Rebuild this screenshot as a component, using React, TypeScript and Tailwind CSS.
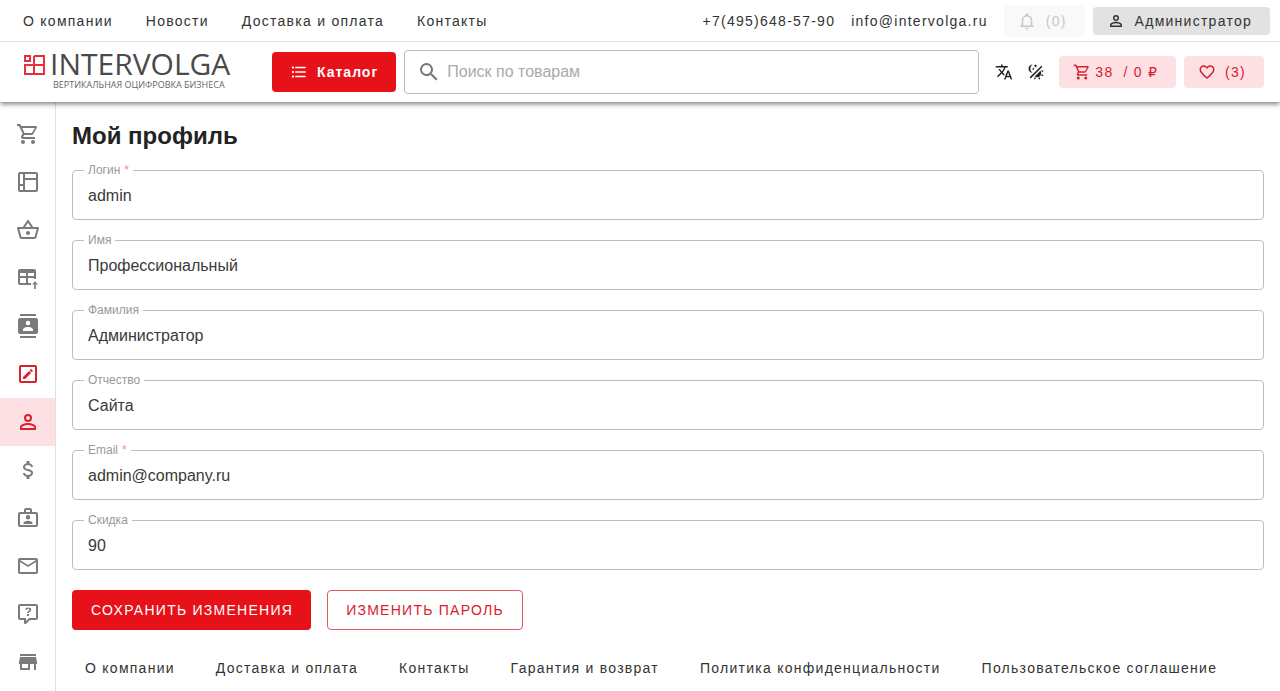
import { useState, type ReactNode } from "react";
import {
  MdFormatListBulleted,
  MdOutlineShoppingBasket,
} from "react-icons/md";

const paths = {
  cart: "M17,18A2,2 0 0,1 19,20A2,2 0 0,1 17,22C15.89,22 15,21.1 15,20C15,18.89 15.89,18 17,18M1,2H4.27L5.21,4H20A1,1 0 0,1 21,5C21,5.17 20.95,5.34 20.88,5.5L17.3,11.97C16.96,12.58 16.3,13 15.55,13H8.1L7.2,14.63L7.17,14.75A0.25,0.25 0 0,0 7.42,15H19V17H7C5.89,17 5,16.1 5,15C5,14.65 5.09,14.32 5.24,14.04L6.6,11.59L3,4H1V2M7,18A2,2 0 0,1 9,20A2,2 0 0,1 7,22C5.89,22 5,21.1 5,20C5,18.89 5.89,18 7,18M16,11L18.78,6H6.14L8.5,11H16Z",
  layout:
    "M4,2H20A2,2 0 0,1 22,4V20A2,2 0 0,1 20,22H4A2,2 0 0,1 2,20V4A2,2 0 0,1 4,2M4,4V14H7V4H4M9,4V8H20V4H9M9,10V20H20V10H9M4,16V20H7V16H4Z",
  tableUp:
    "M4,3H18A2,2 0 0,1 20,5V13H18V12H12V17H15V19H4A2,2 0 0,1 2,17V5A2,2 0 0,1 4,3M4,7V10H10V7H4M12,7V10H18V7H12M4,12V17H10V12H4M18.2,23V18.5H16.2L19,15.2L21.8,18.5H19.8V23Z",
  contacts:
    "M20,0H4V2H20V0M4,24H20V22H4V24M20,4H4A2,2 0 0,0 2,6V18A2,2 0 0,0 4,20H20A2,2 0 0,0 22,18V6A2,2 0 0,0 20,4M12,6.75A2.25,2.25 0 0,1 14.25,9A2.25,2.25 0 0,1 12,11.25A2.25,2.25 0 0,1 9.75,9A2.25,2.25 0 0,1 12,6.75M17,17H7V15.5C7,13.83 10.33,13 12,13C13.67,13 17,13.83 17,15.5V17Z",
  pencil:
    "M19,19V5H5V19H19M19,3A2,2 0 0,1 21,5V19C21,20.11 20.1,21 19,21H5A2,2 0 0,1 3,19V5A2,2 0 0,1 5,3H19M16.7,9.35L15.7,10.35L13.65,8.3L14.65,7.3C14.86,7.08 15.21,7.08 15.42,7.3L16.7,8.58C16.92,8.79 16.92,9.14 16.7,9.35M7,14.94L13.06,8.88L15.12,10.94L9.06,17H7V14.94Z",
  account:
    "M12,4A4,4 0 0,1 16,8A4,4 0 0,1 12,12A4,4 0 0,1 8,8A4,4 0 0,1 12,4M12,6A2,2 0 0,0 10,8A2,2 0 0,0 12,10A2,2 0 0,0 14,8A2,2 0 0,0 12,6M12,13C14.67,13 20,14.33 20,17V20H4V17C4,14.33 9.33,13 12,13M12,14.9C9.03,14.9 5.9,16.36 5.9,17V18.1H18.1V17C18.1,16.36 14.97,14.9 12,14.9Z",
  dollar:
    "M7,15H9C9,16.08 10.37,17 12,17C13.63,17 15,16.08 15,15C15,13.9 13.96,13.5 11.76,12.97C9.64,12.44 7,11.78 7,9C7,7.21 8.47,5.69 10.5,5.18V3H13.5V5.18C15.53,5.69 17,7.21 17,9H15C15,7.92 13.63,7 12,7C10.37,7 9,7.92 9,9C9,10.1 10.04,10.5 12.24,11.03C14.36,11.56 17,12.22 17,15C17,16.79 15.53,18.31 13.5,18.82V21H10.5V18.82C8.47,18.31 7,16.79 7,15Z",
  briefcase:
    "M10,2H14A2,2 0 0,1 16,4V6H20A2,2 0 0,1 22,8V19A2,2 0 0,1 20,21H4A2,2 0 0,1 2,19V8A2,2 0 0,1 4,6H8V4A2,2 0 0,1 10,2M14,6V4H10V6H14M4,8V19H20V8H4M12,9A2.25,2.25 0 0,1 14.25,11.25A2.25,2.25 0 0,1 12,13.5A2.25,2.25 0 0,1 9.75,11.25A2.25,2.25 0 0,1 12,9M16.5,18H7.5V16.88C7.5,15.63 9.5,14.63 12,14.63C14.5,14.63 16.5,15.63 16.5,16.88V18Z",
  mail: "M22 6C22 4.9 21.1 4 20 4H4C2.9 4 2 4.9 2 6V18C2 19.1 2.9 20 4 20H20C21.1 20 22 19.1 22 18V6M20 6L12 11L4 6H20M20 18H4V8L12 13L20 8V18Z",
  question:
    "M4,2H20A2,2 0 0,1 22,4V16A2,2 0 0,1 20,18H13.9L10.2,21.71C10,21.9 9.75,22 9.5,22H9A1,1 0 0,1 8,21V18H4A2,2 0 0,1 2,16V4C2,2.89 2.9,2 4,2M4,4V16H10V19.08L13.08,16H20V4H4M12.19,5.5C11.3,5.5 10.59,5.68 10.05,6.04C9.5,6.4 9.22,7 9.27,7.69H11.24C11.24,7.41 11.34,7.2 11.5,7.06C11.7,6.92 11.92,6.85 12.19,6.85C12.5,6.85 12.77,6.93 12.95,7.11C13.13,7.28 13.22,7.5 13.22,7.8C13.22,8.08 13.14,8.33 13,8.54C12.83,8.76 12.62,8.94 12.36,9.08C11.84,9.4 11.5,9.68 11.29,9.92C11.1,10.16 11,10.5 11,11H13C13,10.72 13.05,10.5 13.14,10.32C13.23,10.15 13.4,10 13.66,9.85C14.12,9.64 14.5,9.36 14.79,9C15.08,8.63 15.23,8.24 15.23,7.8C15.23,7.1 14.96,6.54 14.42,6.12C13.88,5.71 13.13,5.5 12.19,5.5M11,12V14H13V12H11Z",
  store:
    "M12,18H6V14H12M21,14V12L20,7H4L3,12V14H4V20H14V14H18V20H20V14M20,4H4V6H20V4Z",
  translate:
    "M12.87,15.07L10.33,12.56L10.36,12.53C12.1,10.59 13.34,8.36 14.07,6H17V4H10V2H8V4H1V6H12.17C11.5,7.92 10.44,9.75 9,11.35C8.07,10.32 7.3,9.19 6.69,8H4.69C5.42,9.63 6.42,11.17 7.67,12.56L2.58,17.58L4,19L9,14L12.11,17.11L12.87,15.07M18.5,10H16.5L12,22H14L15.12,19H19.87L21,22H23L18.5,10M15.88,17L17.5,12.67L19.12,17H15.88Z",
  theme:
    "M7.5,2C5.71,3.15 4.5,5.18 4.5,7.5C4.5,9.82 5.71,11.85 7.53,13C4.46,13 2,10.54 2,7.5A5.5,5.5 0 0,1 7.5,2M19.07,3.5L20.5,4.93L4.93,20.5L3.5,19.07L19.07,3.5M12.89,5.93L11.41,5L9.97,6L10.39,4.3L9,3.24L10.75,3.12L11.33,1.47L12,3.1L13.73,3.13L12.38,4.26L12.89,5.93M9.59,9.54L8.43,8.81L7.31,9.59L7.65,8.27L6.56,7.44L7.92,7.35L8.37,6.06L8.88,7.33L10.24,7.36L9.19,8.23L9.59,9.54M19,13.5A5.5,5.5 0 0,1 13.5,19C12.28,19 11.15,18.6 10.24,17.93L17.93,10.24C18.6,11.15 19,12.28 19,13.5M14.6,20.08L17.37,18.93L17.13,22.28L14.6,20.08M18.93,17.38L20.08,14.61L22.28,17.15L18.93,17.38M20.08,12.42L18.94,9.64L22.28,9.88L20.08,12.42M9.63,18.93L12.4,20.08L9.87,22.27L9.63,18.93Z",
  bell: "M10 21H14C14 22.1 13.1 23 12 23S10 22.1 10 21M21 19V20H3V19L5 17V11C5 7.9 7.03 5.17 10 4.29C10 4.19 10 4.1 10 4C10 2.9 10.9 2 12 2S14 2.9 14 4C14 4.1 14 4.19 14 4.29C16.97 5.17 19 7.9 19 11V17L21 19M17 11C17 8.24 14.76 6 12 6S7 8.24 7 11V18H17V11Z",
  heart:
    "M12.1,18.55L12,18.65L11.89,18.55C7.14,14.24 4,11.39 4,8.5C4,6.5 5.5,5 7.5,5C9.04,5 10.54,6 11.07,7.36H12.93C13.46,6 14.96,5 16.5,5C18.5,5 20,6.5 20,8.5C20,11.39 16.86,14.24 12.1,18.55M16.5,3C14.76,3 13.09,3.81 12,5.08C10.91,3.81 9.24,3 7.5,3C4.42,3 2,5.41 2,8.5C2,12.27 5.4,15.36 10.55,20.03L12,21.35L13.45,20.03C18.6,15.36 22,12.27 22,8.5C22,5.41 19.58,3 16.5,3Z",
  search:
    "M9.5,3A6.5,6.5 0 0,1 16,9.5C16,11.11 15.41,12.59 14.44,13.73L14.71,14H15.5L20.5,19L19,20.5L14,15.5V14.71L13.73,14.44C12.59,15.41 11.11,16 9.5,16A6.5,6.5 0 0,1 3,9.5A6.5,6.5 0 0,1 9.5,3M9.5,5C7,5 5,7 5,9.5C5,12 7,14 9.5,14C12,14 14,12 14,9.5C14,7 12,5 9.5,5Z",
};

function Icon({ name, className = "size-6" }: { name: keyof typeof paths; className?: string }) {
  return (
    <svg viewBox="0 0 24 24" fill="currentColor" aria-hidden="true" className={`shrink-0 ${className}`}>
      <path d={paths[name]} />
    </svg>
  );
}

function Logo() {
  return (
    <a href="#" aria-label="Intervolga" className="shrink-0">
      <svg viewBox="0 0 208 40" className="h-10 w-52 overflow-visible" aria-hidden="true">
        <g fill="none" stroke="#e8303c" strokeWidth="2">
          <rect x="1" y="4" width="5" height="5" />
          <path d="M10 4H20V22H1V13H20M10 4V22" />
        </g>
        <text x="26" y="23" fontFamily="Open Sans" fontSize="30" fill="#4a4a4a">INTERVOLGA</text>
        <text x="29" y="36" fontFamily="Open Sans" fontSize="9" fill="#666">ВЕРТИКАЛЬНАЯ ОЦИФРОВКА БИЗНЕСА</text>
      </svg>
    </a>
  );
}

const topLinks = ["О компании", "Новости", "Доставка и оплата", "Контакты"];

const footerLinks = [
  "О компании",
  "Доставка и оплата",
  "Контакты",
  "Гарантия и возврат",
  "Политика конфиденциальности",
  "Пользовательское соглашение",
];

const sideItems: { label: string; icon: ReactNode; tone?: string }[] = [
  { label: "Корзина", icon: <Icon name="cart" /> },
  { label: "Рабочий стол", icon: <Icon name="layout" /> },
  { label: "Заказы", icon: <MdOutlineShoppingBasket className="size-6" /> },
  { label: "Импорт", icon: <Icon name="tableUp" /> },
  { label: "Контакты", icon: <Icon name="contacts" /> },
  { label: "Редактирование", icon: <Icon name="pencil" />, tone: "text-[#d9202c]" },
  { label: "Профиль", icon: <Icon name="account" />, tone: "bg-[#fde0e3] text-[#d9202c]" },
  { label: "Оплата", icon: <Icon name="dollar" /> },
  { label: "Компания", icon: <Icon name="briefcase" /> },
  { label: "Сообщения", icon: <Icon name="mail" /> },
  { label: "Поддержка", icon: <Icon name="question" /> },
  { label: "Магазин", icon: <Icon name="store" /> },
];

const fields = [
  { id: "login", label: "Логин", value: "admin", required: true },
  { id: "name", label: "Имя", value: "Профессиональный" },
  { id: "surname", label: "Фамилия", value: "Администратор" },
  { id: "patronymic", label: "Отчество", value: "Сайта" },
  { id: "email", label: "Email", value: "admin@company.ru", required: true },
  { id: "discount", label: "Скидка", value: "90" },
];

function Field({ id, label, value, required }: { id: string; label: string; value: string; required?: boolean }) {
  const [text, setText] = useState(value);
  return (
    <div className="relative">
      <label htmlFor={id} className="absolute -top-2 left-3 bg-white px-1 text-xs leading-4 text-[#999]">
        {label}
        {required && <span className="ml-1 text-[#f08a96]">*</span>}
      </label>
      <input
        id={id}
        value={text}
        required={required}
        onChange={(e) => setText(e.target.value)}
        className="block h-[50px] w-full rounded border border-[#bdbdbd] bg-white px-[15px] pt-0.5 text-base text-[#3a3a3a]"
      />
    </div>
  );
}

export default function App() {
  return (
    <div className="flex h-screen flex-col overflow-hidden bg-white font-['Liberation_Sans',Arial,sans-serif] text-[#333]">
      <header className="relative z-10 shrink-0 bg-white shadow-[0_2px_5px_rgba(0,0,0,0.5)]">
        <div className="flex h-[42px] items-center justify-between border-b border-[#e0e0e0] pr-2.5 pl-[23px] text-sm tracking-[0.09em]">
          <nav className="flex gap-[33px]">
            {topLinks.map((t) => (
              <a key={t} href="#">{t}</a>
            ))}
          </nav>
          <div className="flex items-center">
            <a href="tel:+74956485790">+7(495)648-57-90</a>
            <a href="mailto:info@intervolga.ru" className="ml-4">info@intervolga.ru</a>
            <button disabled className="ml-4 flex h-8 items-center gap-2.5 rounded bg-[#f9f9f9] pr-[18px] pl-3.5 tracking-[0.09em] text-[#c8c8c8]">
              <Icon name="bell" className="size-[18px]" />
              (0)
            </button>
            <button className="ml-2 flex h-7 items-center gap-2.5 rounded bg-[#e2e2e2] pr-[18px] pl-3.5 tracking-[0.09em] text-[#333]">
              <Icon name="account" className="size-[18px]" />
              Администратор
            </button>
          </div>
        </div>
        <div className="flex h-[60px] items-center pr-4 pl-6">
          <Logo />
          <button className="ml-10 flex h-10 shrink-0 items-center gap-[9px] rounded bg-[#e71119] px-[18px] text-sm font-bold tracking-[1px] text-white">
            <MdFormatListBulleted className="size-[18px]" />
            Каталог
          </button>
          <label className="ml-2 flex h-11 flex-1 items-center gap-1.5 rounded border border-[#bdbdbd] px-3 text-[#757575]">
            <Icon name="search" />
            <input
              type="search"
              aria-label="Поиск по товарам"
              placeholder="Поиск по товарам"
              className="min-w-0 flex-1 text-base text-[#333] placeholder:text-[#aaa]"
            />
          </label>
          <button aria-label="Язык" className="ml-4 text-[#222]">
            <Icon name="translate" className="size-[18px]" />
          </button>
          <button aria-label="Тема" className="ml-3.5 text-[#222]">
            <Icon name="theme" className="size-[18px]" />
          </button>
          <button className="ml-3.5 flex h-8 items-center rounded bg-[#fde0e3] pr-[18px] pl-3.5 text-sm tracking-[0.09em] text-[#d9202c]">
            <Icon name="cart" className="size-[18px]" />
            <span className="ml-1">38</span>
            <span className="ml-2.5">
              / 0 <span className="font-['DejaVu_Sans',sans-serif]">₽</span>
            </span>
          </button>
          <button className="ml-2 flex h-8 items-center gap-[9px] rounded bg-[#fde0e3] pr-[18px] pl-3.5 text-sm tracking-[0.09em] text-[#d9202c]">
            <Icon name="heart" className="size-[18px]" />
            (3)
          </button>
        </div>
      </header>

      <div className="flex min-h-0 flex-1">
        <aside className="w-14 shrink-0 border-r border-[#e0e0e0] pt-2">
          <nav className="flex flex-col">
            {sideItems.map((s) => (
              <a key={s.label} href="#" aria-label={s.label} className={`flex h-12 shrink-0 items-center justify-center ${s.tone ?? "text-[#7a7a7a]"}`}>
                {s.icon}
              </a>
            ))}
          </nav>
        </aside>
        <div className="min-w-0 flex-1 px-4 pt-4">
          <main>
            <h1 className="text-2xl leading-9 font-bold text-[#222]">Мой профиль</h1>
            <form onSubmit={(e) => e.preventDefault()}>
              <div className="mt-4 flex flex-col gap-5">
                {fields.map((f) => (
                  <Field key={f.id} {...f} />
                ))}
              </div>
              <div className="mt-5 flex gap-4 text-sm">
                <button type="submit" className="h-10 rounded bg-[#e71119] pr-[18px] pl-[19px] tracking-[0.09em] text-white">
                  СОХРАНИТЬ ИЗМЕНЕНИЯ
                </button>
                <button type="button" className="h-10 rounded border border-[#dd5a62] px-[18px] tracking-[0.09em] text-[#d9202c]">
                  ИЗМЕНИТЬ ПАРОЛЬ
                </button>
              </div>
            </form>
          </main>
          <footer className="mt-7 flex gap-[41px] pl-[13px] text-sm tracking-[0.09em] whitespace-nowrap">
            {footerLinks.map((t) => (
              <a key={t} href="#">{t}</a>
            ))}
          </footer>
        </div>
      </div>
    </div>
  );
}
